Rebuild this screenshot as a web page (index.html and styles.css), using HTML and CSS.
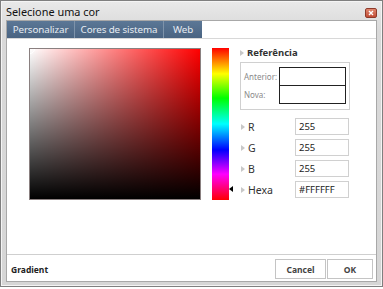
FILE: index.html
```html
<!DOCTYPE html>
<html>
<head>
<meta charset="utf-8">
<link rel="stylesheet" href="styles.css">
</head>
<body>
<div class="window">
  <div class="titlebar">
    <span class="title">Selecione uma cor</span>
    <span class="close"><svg width="6" height="6" viewBox="0 0 6 6"><path d="M1 1L5 5M5 1L1 5" stroke="#fff" stroke-width="1.4"/></svg></span>
  </div>
  <div class="inner">
    <div class="tabs">
      <div class="tab t1">Personalizar</div>
      <div class="tab t2">Cores de sistema</div>
      <div class="tab t3">Web</div>
    </div>
    <div class="main">
      <div class="square"><span class="picker"></span></div>
      <div class="hue"><span class="hue-arrow"></span></div>
      <div class="side">
        <div class="head"><span class="tri"></span>Referência</div>
        <div class="refbox">
          <div class="labels">
            <span>Anterior:</span>
            <span>Nova:</span>
          </div>
          <div class="swatches">
            <div class="sw"></div>
            <div class="sw"></div>
          </div>
        </div>
        <div class="rows">
          <div class="row"><span class="lab"><span class="tri"></span>R</span><span class="inp">255</span></div>
          <div class="row"><span class="lab"><span class="tri"></span>G</span><span class="inp">255</span></div>
          <div class="row"><span class="lab"><span class="tri"></span>B</span><span class="inp">255</span></div>
          <div class="row"><span class="lab"><span class="tri"></span>Hexa</span><span class="inp">#FFFFFF</span></div>
        </div>
      </div>
    </div>
    <div class="footer">
      <span class="grad">Gradient</span>
      <div class="buttons">
        <span class="btn cancel">Cancel</span>
        <span class="btn ok">OK</span>
      </div>
    </div>
  </div>
</div>
</body>
</html>
```
FILE: styles.css
```css
* { box-sizing: border-box; }
html, body { margin: 0; padding: 0; background: #fff; }
body { font-family: "Noto Sans", "Open Sans", sans-serif; }

.window {
  width: 383px;
  height: 287px;
  border: 1px solid #7f7f7f;
  background: linear-gradient(#e9e9e9, #d9d9d9 30px, #d6d6d6);
  padding: 0 5px 4px 5px;
  display: flex;
  flex-direction: column;
  box-shadow: inset 0 0 0 1px #f4f4f4;
}

.titlebar {
  height: 19px;
  display: flex;
  align-items: center;
  justify-content: space-between;
}
.title { font-size: 10.9px; color: #111; margin-top: 1px; }
.close {
  width: 12px; height: 10px;
  margin-top: 5px;
  background: linear-gradient(#e0876f, #c24d36);
  border: 1px solid #8e3a2a;
  border-radius: 2px;
  display: flex; align-items: center; justify-content: center;
}

.inner {
  flex: 1;
  border: 1px solid #a8a8a8;
  background: #fff;
  display: flex;
  flex-direction: column;
}

.tabs {
  height: 18px;
  display: flex;
  border-bottom: 1px solid #d8d8d8;
}
.tab {
  height: 17px;
  background: linear-gradient(#5b7796, #4a6482);
  color: #e6ecf2;
  font-size: 9.8px;
  letter-spacing: -0.1px;
  line-height: 17px;
  text-align: center;
  white-space: nowrap;
  border-right: 1px solid #7e93aa;
}
.t1 { width: 68px; }
.t2 { width: 89px; }
.t3 { width: 38px; border-right: none; }

.main {
  flex: 1;
  display: flex;
  padding: 9px 0 0 22px;
}
.square {
  width: 172px; height: 152px;
  border: 1px solid #8a8080;
  background: linear-gradient(to top, #000, rgba(0,0,0,0)), linear-gradient(to right, #fff, #f00);
  position: relative;
  overflow: hidden;
}
.picker {
  position: absolute;
  left: -5px; top: -5px;
  width: 10px; height: 10px;
  border: 1px solid #fff;
  border-radius: 50%;
}
.hue {
  width: 17px; height: 152px;
  margin-left: 11px;
  background: linear-gradient(#f00, #ff0 17%, #0f0 33%, #0ff 50%, #00f 67%, #f0f 83%, #f00);
  position: relative;
}
.hue-arrow {
  position: absolute;
  right: -4px; top: 138px;
  width: 0; height: 0;
  border-top: 3px solid transparent;
  border-bottom: 3px solid transparent;
  border-right: 4px solid #000;
}

.side {
  margin-left: 11px;
  width: 112px;
  display: flex;
  flex-direction: column;
}
.head {
  font-size: 9.5px;
  font-weight: bold;
  color: #333;
  height: 12px;
  line-height: 12px;
  margin-top: -1px;
  display: flex;
  align-items: center;
}
.tri {
  display: inline-block;
  width: 0; height: 0;
  border-top: 3px solid transparent;
  border-bottom: 3px solid transparent;
  border-left: 4px solid #c8c8c8;
  margin-right: 3px;
}
.refbox {
  margin-top: 3px;
  width: 110px; height: 48px;
  border: 1px solid #d0d0d0;
  display: flex;
  padding: 4px 3px 5px 3px;
}
.labels {
  display: flex; flex-direction: column; justify-content: space-around;
  font-size: 8px; color: #8a8a8a;
  width: 35px;
}
.swatches {
  width: 67px;
  display: flex; flex-direction: column;
  border: 1px solid #222;
}
.sw { flex: 1; }
.sw + .sw { border-top: 1px solid #222; }

.rows {
  margin-top: 8px;
  display: flex; flex-direction: column;
  gap: 4px;
}
.row {
  display: flex;
  align-items: center;
  height: 17px;
}
.lab {
  width: 55px;
  font-size: 10.5px;
  color: #333;
  display: flex; align-items: center;
  padding-left: 1px;
}
.inp {
  width: 54px; height: 17px;
  border: 1px solid #d0d0d0;
  font-size: 9.5px;
  color: #222;
  padding-left: 3px;
  line-height: 15px;
}

.footer {
  height: 27px;
  border-top: 1px solid #cfcfcf;
  display: flex;
  align-items: center;
  justify-content: space-between;
  padding: 0 3px 0 4px;
}
.grad { font-size: 8.5px; font-weight: bold; color: #222; margin-top: 2px; }
.buttons { display: flex; gap: 1px; margin-top: 2px; }
.btn {
  height: 20px;
  border: 1px solid #c4c4c4;
  font-size: 8.5px;
  font-weight: bold;
  color: #444;
  display: flex; align-items: center; justify-content: center;
  background: #fff;
}
.cancel { width: 51px; }
.ok { width: 46px; }
```
